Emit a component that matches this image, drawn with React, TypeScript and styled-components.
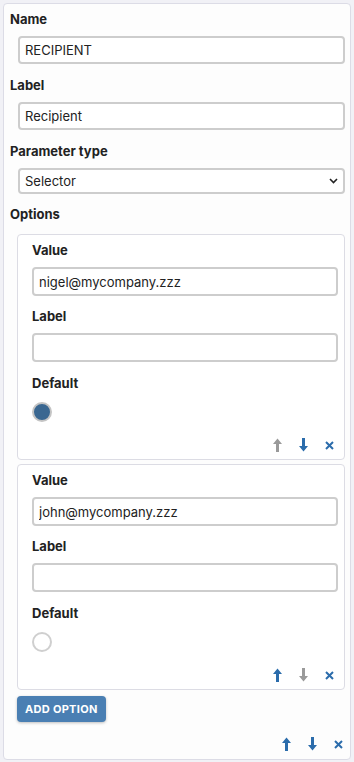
import React from "react";
import styled, { createGlobalStyle } from "styled-components";

const Global = createGlobalStyle`
  html, body { margin: 0; padding: 0; background: #f1f1f6; }
  body { font-family: Inter, "Noto Sans", sans-serif; color: #222; }
  * { box-sizing: border-box; }
`;

const Panel = styled.div`
  margin: 3px;
  width: 348px;
  background: #fdfdfd;
  border: 1px solid #dcdce6;
  border-radius: 4px;
  padding: 7px 5px 8px 6px;
  display: flex;
  flex-direction: column;
`;

const Field = styled.div<{ $gap?: number }>`
  display: flex;
  flex-direction: column;
  margin-bottom: ${(p) => p.$gap ?? 13}px;
`;

const FieldLabel = styled.label`
  font-size: 13px;
  font-weight: 700;
  line-height: 16px;
  color: #222;
  margin-bottom: 9px;
`;

const TextInput = styled.input`
  height: 28px;
  margin-left: 8px;
  border: 2px solid #cdcdcd;
  border-radius: 4px;
  background: #fff;
  padding: 0 5px;
  font-family: Inter, "Noto Sans", sans-serif;
  font-size: 13px;
  color: #222;
  outline: none;
`;

const OptInput = styled(TextInput)`
  margin-left: 0;
  height: 29px;
`;

const SelectWrap = styled.div`
  position: relative;
  margin-left: 8px;
  height: 26px;
`;

const Select = styled.select`
  width: 100%;
  height: 26px;
  appearance: none;
  border: 2px solid #cdcdcd;
  border-radius: 4px;
  background: #fff;
  padding: 0 5px;
  font-family: Inter, "Noto Sans", sans-serif;
  font-size: 13px;
  color: #222;
  outline: none;
`;

const Chevron = styled.svg`
  position: absolute;
  right: 7px;
  top: 10px;
  pointer-events: none;
`;

const OptionList = styled.div`
  margin-left: 7px;
  margin-top: 3px;
  display: flex;
  flex-direction: column;
  gap: 4px;
`;

const OptionCard = styled.div`
  border: 1px solid #dcdce4;
  border-radius: 4px;
  background: #fff;
  padding: 7px 6px 7px 14px;
  display: flex;
  flex-direction: column;
`;

const Radio = styled.span<{ $checked?: boolean }>`
  display: block;
  width: 20px;
  height: 20px;
  margin: 2px 0 16px 0;
  border-radius: 50%;
  border: 2px solid ${(p) => (p.$checked ? "#c4c4c4" : "#cfcfcf")};
  background: ${(p) => (p.$checked ? "#3a6791" : "#fff")};
`;

const IconRow = styled.div<{ $pr?: number }>`
  display: flex;
  justify-content: flex-end;
  align-items: center;
  gap: 16px;
  height: 14px;
  padding-right: ${(p) => p.$pr ?? 4}px;
`;

const IconBtn = styled.span`
  width: 10px;
  height: 14px;
  display: flex;
  align-items: center;
  justify-content: center;
`;

const AddButton = styled.button`
  align-self: flex-start;
  margin: 6px 0 15px 7px;
  height: 26px;
  padding: 0 8px;
  border: none;
  border-radius: 4px;
  background: #4a7fb3;
  color: #fff;
  font-family: Inter, "Noto Sans", sans-serif;
  font-size: 11px;
  font-weight: 700;
  letter-spacing: 0.3px;
  box-shadow: 0 1px 3px rgba(0, 0, 0, 0.25);
`;

const BLUE = "#2b6cab";
const GREY = "#9a9a9a";

const ArrowUp = ({ color }: { color: string }) => (
  <svg width="9" height="14" viewBox="0 0 9 14">
    <path d="M4.5 0.5 L9 6 L6 6 L6 14 L3 14 L3 6 L0 6 Z" fill={color} />
  </svg>
);

const ArrowDown = ({ color }: { color: string }) => (
  <svg width="9" height="14" viewBox="0 0 9 14">
    <path d="M4.5 13.5 L9 8 L6 8 L6 0 L3 0 L3 8 L0 8 Z" fill={color} />
  </svg>
);

const Cross = ({ color }: { color: string }) => (
  <svg width="9" height="9" viewBox="0 0 9 9">
    <path d="M1 1 L8 8 M8 1 L1 8" stroke={color} strokeWidth="2" />
  </svg>
);

const Controls = ({ up, down, pr }: { up: boolean; down: boolean; pr?: number }) => (
  <IconRow $pr={pr}>
    <IconBtn>
      <ArrowUp color={up ? BLUE : GREY} />
    </IconBtn>
    <IconBtn>
      <ArrowDown color={down ? BLUE : GREY} />
    </IconBtn>
    <IconBtn>
      <Cross color={BLUE} />
    </IconBtn>
  </IconRow>
);

const options = [
  { value: "nigel@mycompany.zzz", label: "", def: true, up: false, down: true },
  { value: "john@mycompany.zzz", label: "", def: false, up: true, down: false },
];

export default function App() {
  return (
    <>
      <Global />
      <Panel>
        <Field>
          <FieldLabel>Name</FieldLabel>
          <TextInput defaultValue="RECIPIENT" />
        </Field>
        <Field>
          <FieldLabel>Label</FieldLabel>
          <TextInput defaultValue="Recipient" />
        </Field>
        <Field $gap={12}>
          <FieldLabel>Parameter type</FieldLabel>
          <SelectWrap>
            <Select defaultValue="selector">
              <option value="selector">Selector</option>
            </Select>
            <Chevron width="9" height="6" viewBox="0 0 9 6">
              <path d="M1 1 L4.5 4.5 L8 1" stroke="#222" strokeWidth="1.6" fill="none" />
            </Chevron>
          </SelectWrap>
        </Field>
        <Field $gap={0}>
          <FieldLabel>Options</FieldLabel>
          <OptionList>
            {options.map((o) => (
              <OptionCard key={o.value}>
                <Field $gap={12}>
                  <FieldLabel>Value</FieldLabel>
                  <OptInput defaultValue={o.value} />
                </Field>
                <Field $gap={13}>
                  <FieldLabel>Label</FieldLabel>
                  <OptInput defaultValue={o.label} />
                </Field>
                <FieldLabel>Default</FieldLabel>
                <Radio $checked={o.def} />
                <Controls up={o.up} down={o.down} />
              </OptionCard>
            ))}
          </OptionList>
        </Field>
        <AddButton>ADD OPTION</AddButton>
        <Controls up={true} down={true} pr={2} />
      </Panel>
    </>
  );
}
